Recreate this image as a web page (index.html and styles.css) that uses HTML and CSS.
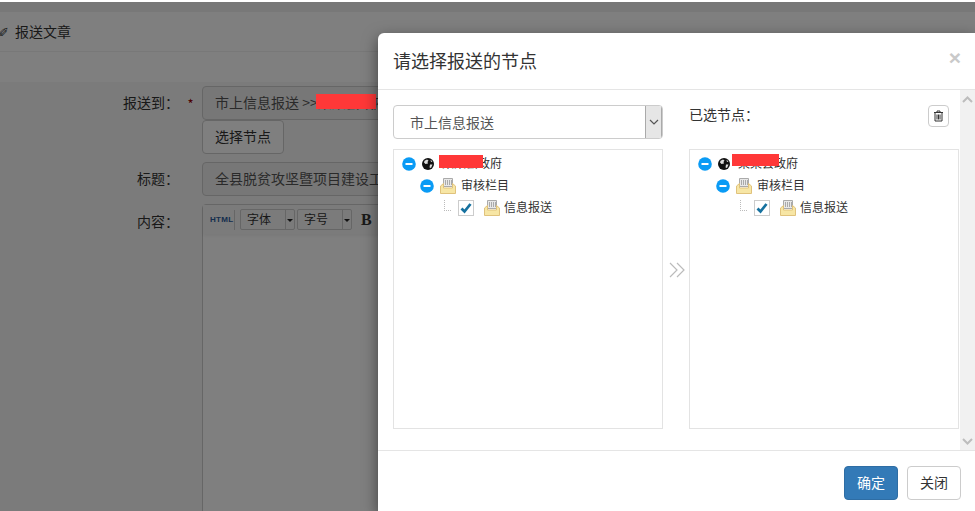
FILE: index.html
```html
<!DOCTYPE html>
<html lang="zh">
<head>
<meta charset="utf-8">
<title>报送文章</title>
<link rel="stylesheet" href="styles.css">
</head>
<body>
<svg class="defs" width="0" height="0" aria-hidden="true">
  <defs>
    <symbol id="minus" viewBox="0 0 14 14">
      <circle cx="7" cy="7" r="6.8" fill="#0a9bf5"/>
      <rect x="3.5" y="6" width="7" height="2" fill="#fff"/>
    </symbol>
    <symbol id="globe" viewBox="0 0 12 12">
      <circle cx="6" cy="6" r="6" fill="#111"/>
      <path d="M2.500 2.800 5 1.500 6.500 2.500 5.500 4 6 5.500 3.500 6 2 4.500ZM8 6.500 10.500 6.500 9 10 7.500 9.500ZM8.500 1.800 10.500 3.500 9 4Z" fill="#ddd"/>
    </symbol>
    <symbol id="folder" viewBox="0 0 16 16">
      <path d="M3.500.5h9v8h-9z" fill="#e8e8e8" stroke="#aaa"/>
      <path d="M5.500 2v5M7.500 2v5M9.500 2v5M11.500 2v5" stroke="#aaa"/>
      <path d="M3.500 5.500.5 8v7.500h15V8l-3-2.500V10h-9z" fill="#f7e6a5" stroke="#e0c27c"/>
    </symbol>
    <symbol id="check" viewBox="0 0 16 16">
      <rect x=".5" y=".5" width="15" height="15" fill="#fff" stroke="#ccc"/>
      <path d="M3.500 8.500 6.500 11.500 12.500 4" fill="none" stroke="#16719f" stroke-width="2.800"/>
    </symbol>
  </defs>
</svg>

<div class="page">
  <div class="topstrip"></div>
  <div class="crumb">
    <span class="crumb-icon">✐</span>
    <span class="crumb-text">报送文章</span>
  </div>
  <div class="form">
    <div class="row row-to">
      <label class="label">报送到：<i class="req">*</i></label>
      <div class="field">
        <div class="input">市上信息报送 &gt;&gt;某某县政府审核栏目</div>
        <button class="btn-plain">选择节点</button>
      </div>
    </div>
    <div class="row row-title">
      <label class="label">标题：<i class="req hidden">*</i></label>
      <div class="field"><div class="input">全县脱贫攻坚暨项目建设工作推进会议召开</div></div>
    </div>
    <div class="row">
      <label class="label label-content">内容：<i class="req hidden">*</i></label>
      <div class="field">
        <div class="editor">
          <div class="toolbar">
            <span class="html-btn">HTML</span>
            <span class="tool-sep"></span>
            <span class="combo"><span class="combo-text">字体</span><span class="combo-arrow"></span></span>
            <span class="combo"><span class="combo-text">字号</span><span class="combo-arrow"></span></span>
            <b class="bold">B</b>
          </div>
        </div>
      </div>
    </div>
  </div>
</div>

<div class="backdrop"></div>
<div class="redact redact-page"></div>

<div class="modal">
  <div class="modal-head">
    <h4 class="modal-title">请选择报送的节点</h4>
    <span class="close">×</span>
  </div>
  <div class="modal-body">
    <div class="modal-content">
      <div class="col">
        <div class="col-head">
          <div class="select">
            <span class="select-text">市上信息报送</span>
            <span class="select-btn"><svg width="10" height="6" viewBox="0 0 10 6"><path d="M1 1l4 4 4-4" fill="none" stroke="#555" stroke-width="1.200"/></svg></span>
          </div>
        </div>
        <div class="tree">
          <div class="node">
            <svg class="ic-minus"><use href="#minus"/></svg>
            <svg class="ic-globe"><use href="#globe"/></svg>
            <span class="node-text root-text">某某县政府<span class="redact redact-a"></span></span>
          </div>
          <div class="node lv2">
            <svg class="ic-minus"><use href="#minus"/></svg>
            <svg class="ic-folder"><use href="#folder"/></svg>
            <span class="node-text">审核栏目</span>
          </div>
          <div class="node lv3">
            <span class="dots"></span>
            <svg class="ic-check"><use href="#check"/></svg>
            <svg class="ic-folder ic-folder3"><use href="#folder"/></svg>
            <span class="node-text">信息报送</span>
          </div>
        </div>
      </div>
      <div class="transfer">
        <svg width="16" height="16" viewBox="0 0 16 16"><path d="M1 1l7 7-7 7M8 1l7 7-7 7" fill="none" stroke="#bbb" stroke-width="1.200"/></svg>
      </div>
      <div class="col">
        <div class="col-head selected-head">
          <span class="selected-label">已选节点：</span>
          <span class="trash">
            <svg width="11" height="12" viewBox="0 0 11 12"><path d="M1 2.500h9M4 2.500V1h3v1.500M2 2.500V11h7V2.500M4 4.500V9.500M5.500 4.500V9.500M7 4.500V9.500" fill="none" stroke="#333" stroke-width="1"/></svg>
          </span>
        </div>
        <div class="tree">
          <div class="node">
            <svg class="ic-minus"><use href="#minus"/></svg>
            <svg class="ic-globe"><use href="#globe"/></svg>
            <span class="node-text root-text">某某县政府<span class="redact redact-b"></span></span>
          </div>
          <div class="node lv2">
            <svg class="ic-minus"><use href="#minus"/></svg>
            <svg class="ic-folder"><use href="#folder"/></svg>
            <span class="node-text">审核栏目</span>
          </div>
          <div class="node lv3">
            <span class="dots"></span>
            <svg class="ic-check"><use href="#check"/></svg>
            <svg class="ic-folder ic-folder3"><use href="#folder"/></svg>
            <span class="node-text">信息报送</span>
          </div>
        </div>
      </div>
    </div>
    <div class="scrollbar">
      <svg width="11" height="7" viewBox="0 0 11 7"><path d="M1 6l4.500-4.500L10 6" fill="none" stroke="#bdbdbd" stroke-width="2"/></svg>
      <svg width="11" height="7" viewBox="0 0 11 7"><path d="M1 1l4.500 4.500L10 1" fill="none" stroke="#bdbdbd" stroke-width="2"/></svg>
    </div>
  </div>
  <div class="modal-foot">
    <button class="btn btn-primary">确定</button>
    <button class="btn btn-default">关闭</button>
  </div>
</div>
</body>
</html>
```
FILE: styles.css
```css
* { box-sizing: border-box; }
html, body { margin: 0; padding: 0; overflow: hidden; }
body {
  position: relative;
  width: 975px;
  height: 511px;
  background: #fff;
  font-family: "Noto Sans CJK SC", "Liberation Sans", sans-serif;
  font-size: 13px;
  color: #333;
}
.defs { position: absolute; }

/* Page beneath the dialog */
.page { height: 511px; overflow: hidden; background: #fff; }
.topstrip { height: 10px; margin-top: 2px; background: #f0f0f0; }
.crumb {
  display: flex;
  align-items: center;
  gap: 6px;
  height: 40px;
  padding-bottom: 1px;
  border-bottom: 1px solid #f0f0f0;
  margin-bottom: 30px;
  font-size: 14px;
}
.crumb-icon { width: 9px; font-size: 13px; overflow: hidden; direction: rtl; }
.form { background: #f7f7f7; height: 430px; padding-top: 4px; }
.row { display: flex; }
.row-to { height: 72px; }
.row-title { height: 42px; margin-top: 4px; }
.label {
  width: 202px;
  display: flex;
  justify-content: flex-end;
  padding: 6px 0 0;
  font-size: 14px;
  color: #333;
}
.label-content { padding-top: 7px; }
.req { width: 23px; padding-top: 2px; font-style: normal; color: #900; font-size: 13px; text-align: center; }
.hidden { visibility: hidden; }
.field { width: 400px; flex: none; }
.input {
  width: 400px;
  height: 34px;
  padding: 5px 12px;
  border: 1px solid #ccc;
  border-radius: 4px;
  background: #eee;
  color: #555;
  font-size: 14px;
  line-height: 20px;
  white-space: nowrap;
  overflow: hidden;
}
.redact { position: absolute; background: #ff3838; }
.redact-page { left: 316px; top: 94px; width: 60px; height: 15px; }
.btn-plain {
  display: block;
  width: 82px;
  height: 34px;
  padding: 0 0 3px;
  border: 1px solid #ccc;
  border-radius: 4px;
  background: #fff;
  color: #333;
  font: inherit;
  font-size: 14px;
}
.editor {
  width: 400px;
  height: 400px;
  border: 1px solid #ccc;
  border-radius: 4px;
  background: #fff;
}
.toolbar {
  display: flex;
  align-items: center;
  height: 29px;
  padding-left: 7px;
  background: #f7f7f7;
  box-shadow: 0 2px 3px rgba(0,0,0,.05);
}
.html-btn { width: 20px; font: bold 8px "Liberation Sans", sans-serif; letter-spacing: .3px; color: #2a5a9a; }
.tool-sep { width: 1px; height: 20px; margin: 0 5px 0 4px; background: #ccc; }
.combo {
  display: flex;
  width: 55px;
  height: 21px;
  margin-right: 2px;
  border: 1px solid #ccc;
  border-radius: 2px;
  font-size: 12px;
  line-height: 17px;
}
.combo-text { flex: 1; padding-left: 6px; border-right: 1px solid #ccc; }
.combo-arrow { width: 8px; position: relative; }
.combo-arrow::after {
  content: "";
  position: absolute;
  left: 1px;
  top: 9px;
  border: 3px solid transparent;
  border-top-color: #222;
  border-bottom: 0;
}
.bold { margin-left: 7px; font: bold 16px "Liberation Serif", serif; }

.backdrop {
  position: absolute;
  inset: 2px 0 0 0;
  background: rgba(0,0,0,.5);
}

/* Dialog */
.modal {
  position: absolute;
  left: 378px;
  top: 33px;
  width: 597px;
  height: 478px;
  display: flex;
  flex-direction: column;
  background: #fff;
  border-radius: 6px 0 0 0;
  box-shadow: 0 5px 15px rgba(0,0,0,.5);
}
.modal-head {
  display: flex;
  justify-content: space-between;
  height: 57px;
  padding: 14px 13px 0 15px;
  border-bottom: 1px solid #e5e5e5;
}
.modal-title { margin: 0; font-size: 18px; font-weight: 400; line-height: 26px; color: #333; }
.close { font: bold 21px/1 "Liberation Sans", sans-serif; color: #c9c9c9; margin-right: 1px; }
.modal-body { display: flex; height: 360px; }
.modal-content { display: flex; flex: 1; padding: 15px 1px 0 15px; }
.col { width: 270px; flex: none; }
.col-head { height: 44px; }
.select {
  display: flex;
  width: 270px;
  height: 34px;
  border: 1px solid #ccc;
  border-radius: 4px;
  background: #fff;
  overflow: hidden;
}
.select-text { flex: 1; padding-left: 16px; font-size: 14px; line-height: 33px; color: #555; }
.select-btn {
  display: flex;
  align-items: center;
  justify-content: center;
  width: 17px;
  background: #e6e6e6;
  border-left: 1px solid #aaa;
  border-right: 1px solid #aaa;
}
.tree {
  height: 280px;
  padding-top: 3px;
  border: 1px solid #e3e3e3;
  font-size: 12px;
  color: #333;
}
.node { display: flex; align-items: center; height: 22px; padding-left: 8px; }
.lv2 { padding-left: 26px; }
.lv3 { padding-left: 50px; }
.ic-minus { width: 14px; height: 14px; flex: none; }
.ic-globe { width: 12px; height: 12px; flex: none; margin-left: 6px; }
.ic-folder { width: 16px; height: 16px; flex: none; margin-left: 6px; }
.ic-folder3 { margin-left: 10px; }
.ic-check { width: 16px; height: 16px; flex: none; }
.dots {
  width: 7px;
  height: 11px;
  margin: -6px 7px 0 0;
  border-left: 1px dotted #bbb;
  border-bottom: 1px dotted #bbb;
  flex: none;
}
.node-text { margin: -3px 0 0 5px; position: relative; white-space: nowrap; }
.lv3 .node-text { margin-left: 4px; }
.root-text { margin-left: 8px; }
.redact-a { left: -3px; top: 1px; width: 44px; height: 13px; }
.redact-b { left: -6px; top: 0; width: 47px; height: 12px; }
.transfer { width: 26px; flex: none; padding: 157px 0 0 6px; }
.selected-head { display: flex; justify-content: space-between; }
.selected-label { font-size: 14px; line-height: 20px; margin-top: -1px; }
.trash {
  display: flex;
  align-items: center;
  justify-content: center;
  width: 21px;
  height: 22px;
  margin-right: 10px;
  border: 1px solid #ccc;
  border-radius: 4px;
}
.scrollbar {
  width: 15px;
  flex: none;
  display: flex;
  flex-direction: column;
  justify-content: space-between;
  align-items: center;
  padding: 6px 0 5px;
  background: #f1f1f1;
}
.modal-foot {
  display: flex;
  justify-content: flex-end;
  gap: 9px;
  height: 61px;
  padding: 15px 14px 0 0;
  border-top: 1px solid #e5e5e5;
}
.btn {
  width: 54px;
  height: 34px;
  padding: 0 0 2px;
  border-radius: 4px;
  border: 1px solid;
  font: inherit;
  font-size: 14px;
}
.btn-primary { background: #337ab7; border-color: #2e6da4; color: #fff; }
.btn-default { background: #fff; border-color: #ccc; color: #333; }
```
